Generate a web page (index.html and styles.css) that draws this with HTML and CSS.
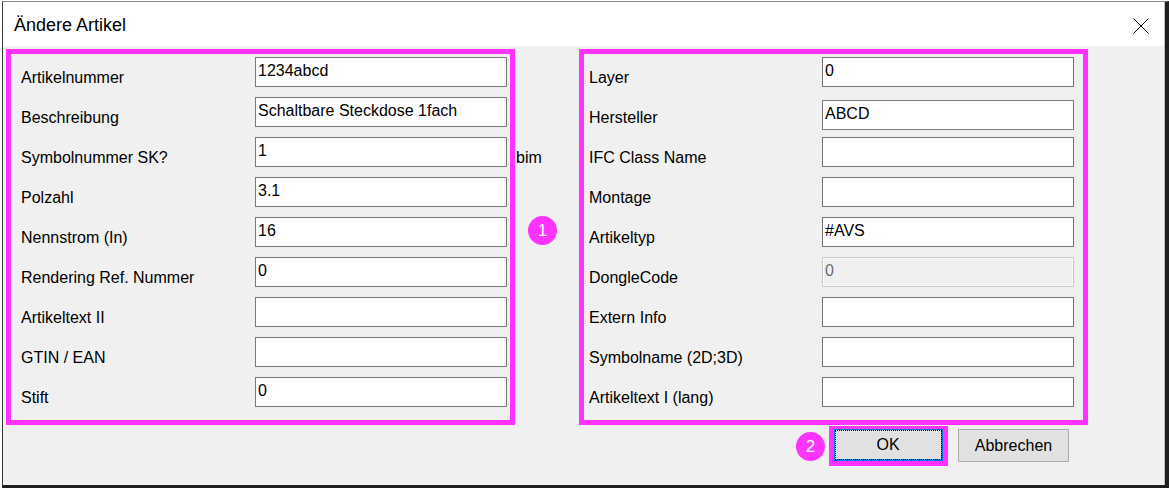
FILE: index.html
```html
<!DOCTYPE html>
<html lang="de">
<head>
<meta charset="utf-8">
<title>Ändere Artikel</title>
<link rel="stylesheet" href="styles.css">
</head>
<body>
<div class="window">
  <div class="titlebar">
    <span class="title">Ändere Artikel</span>
    <svg class="close" width="16" height="16" viewBox="0 0 16 16"><path d="M0.5 0.5 L15.5 15.5 M15.5 0.5 L0.5 15.5" stroke="#000" stroke-width="1" fill="none"/></svg>
  </div>
  <div class="content">
    <div class="panels">
      <div class="panel panel-left">
        <div class="row"><span class="label">Artikelnummer</span><div class="field">1234abcd</div></div>
        <div class="row"><span class="label">Beschreibung</span><div class="field">Schaltbare Steckdose 1fach</div></div>
        <div class="row"><span class="label">Symbolnummer SK?</span><div class="field">1</div></div>
        <div class="row"><span class="label">Polzahl</span><div class="field">3.1</div></div>
        <div class="row"><span class="label">Nennstrom (In)</span><div class="field">16</div></div>
        <div class="row"><span class="label">Rendering Ref. Nummer</span><div class="field">0</div></div>
        <div class="row"><span class="label">Artikeltext II</span><div class="field"></div></div>
        <div class="row"><span class="label">GTIN / EAN</span><div class="field"></div></div>
        <div class="row"><span class="label">Stift</span><div class="field">0</div></div>
      </div>
      <div class="gutter">
        <span class="bim">bim</span>
        <span class="badge badge-one">1</span>
      </div>
      <div class="panel panel-right">
        <div class="row"><span class="label">Layer</span><div class="field">0</div></div>
        <div class="row"><span class="label">Hersteller</span><div class="field field-low">ABCD</div></div>
        <div class="row"><span class="label">IFC Class Name</span><div class="field"></div></div>
        <div class="row"><span class="label">Montage</span><div class="field"></div></div>
        <div class="row"><span class="label">Artikeltyp</span><div class="field">#AVS</div></div>
        <div class="row"><span class="label">DongleCode</span><div class="field field-disabled">0</div></div>
        <div class="row"><span class="label">Extern Info</span><div class="field"></div></div>
        <div class="row"><span class="label">Symbolname (2D;3D)</span><div class="field"></div></div>
        <div class="row"><span class="label">Artikeltext I (lang)</span><div class="field"></div></div>
      </div>
    </div>
    <div class="footer">
      <span class="badge badge-two">2</span>
      <div class="ok-wrap"><button class="btn btn-ok">OK</button></div>
      <button class="btn btn-cancel">Abbrechen</button>
    </div>
  </div>
</div>
</body>
</html>
```
FILE: styles.css
```css
* { box-sizing: border-box; }
html, body { margin: 0; padding: 0; }
body {
  width: 1169px;
  height: 488px;
  background: #ffffff;
  overflow: hidden;
  font-family: "Liberation Sans", Arial, sans-serif;
}
.window {
  margin: 1px 0 0 2px;
  width: 1167px;
  height: 487px;
  border-top: 1px solid #8a8a8a;
  border-left: 1px solid #3a3a3a;
  border-right: 4px solid #1f1f1f;
  border-bottom: 3px solid #1f1f1f;
  display: flex;
  flex-direction: column;
  background: #f0f0f0;
}
.titlebar {
  height: 44px;
  background: #ffffff;
  display: flex;
  align-items: flex-start;
  justify-content: space-between;
  padding: 2px 15px 0 11px;
  border-right: 1px solid #bdbdbd;
}
.title {
  font-size: 18px;
  line-height: 42px;
  color: #000;
}
.close {
  margin-top: 14px;
  display: block;
}
.content {
  flex: 1;
  padding: 3px 0 0 3px;
  display: flex;
  flex-direction: column;
  border-right: 1px solid #bdbdbd;
}
.panels {
  display: flex;
  height: 376px;
}
.panel {
  width: 509px;
  height: 376px;
  border: 5px solid #ff33ff;
  display: flex;
  flex-direction: column;
}
.row {
  height: 40px;
  display: flex;
  align-items: flex-start;
  flex-shrink: 0;
}
.label {
  font-size: 16px;
  line-height: 18px;
  color: #000;
  padding-top: 15px;
  white-space: nowrap;
}
.panel-left .label { width: 244px; padding-left: 10px; }
.panel-right .label { width: 238px; padding-left: 5px; }
.field {
  width: 252px;
  height: 30px;
  margin-top: 3px;
  background: #ffffff;
  border: 1px solid #7a7a7a;
  font-size: 16px;
  line-height: 18px;
  padding: 4px 2px 0 2px;
  color: #000;
  white-space: nowrap;
  overflow: hidden;
}
.field-low { margin-top: 6px; }
.field-disabled {
  background: #f0f0f0;
  border-color: #c8c8c8;
  box-shadow: inset 0 0 0 1px #fbfbfb;
  color: #6d6d6d;
}
.gutter {
  width: 64px;
  display: flex;
  flex-direction: column;
  align-items: flex-start;
}
.bim {
  font-size: 16px;
  line-height: 18px;
  margin-top: 100px;
  padding-left: 1px;
  color: #000;
}
.badge {
  width: 29px;
  height: 29px;
  border-radius: 50%;
  background: #ff33ff;
  color: #ffffff;
  font-size: 17px;
  display: flex;
  align-items: center;
  justify-content: center;
  flex-shrink: 0;
}
.badge-one { margin-top: 49px; margin-left: 13px; }
.footer {
  display: flex;
  justify-content: flex-end;
  align-items: flex-start;
  padding: 1px 95px 0 0;
}
.badge-two { margin-top: 6px; margin-right: 4px; }
.ok-wrap {
  border: 5px solid #ff33ff;
  border-top-width: 3px;
  width: 119px;
  height: 40px;
}
.btn {
  font-family: "Liberation Sans", Arial, sans-serif;
  font-size: 16px;
  color: #000;
  background: #e1e1e1;
  padding: 0;
  margin: 0;
  display: flex;
  align-items: center;
  justify-content: center;
}
.btn-ok {
  width: 109px;
  height: 32px;
  border: 1px solid #0078d7;
  border-right-width: 2px;
  border-bottom-width: 2px;
  outline: 1px dotted #000;
  outline-offset: -2px;
}
.btn-cancel {
  width: 111px;
  height: 33px;
  margin-top: 3px;
  margin-left: 10px;
  border: 1px solid #adadad;
}
```
